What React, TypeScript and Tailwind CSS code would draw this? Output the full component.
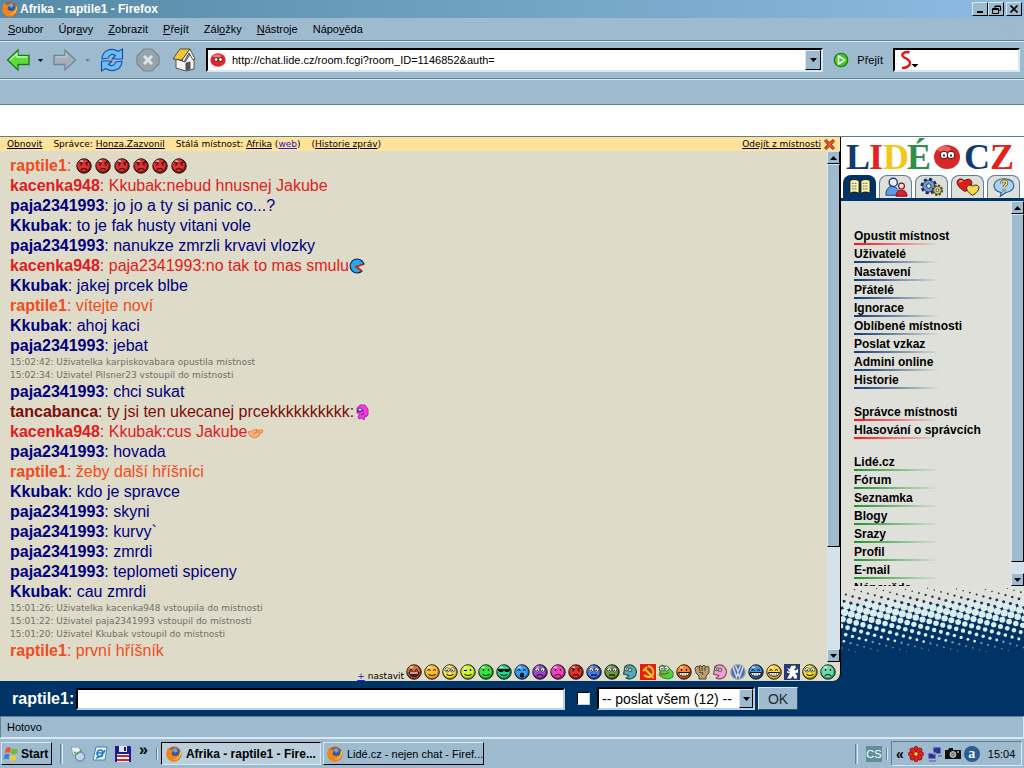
import React from 'react';

const raised = 'border border-t-[#d8e8f2] border-l-[#d8e8f2] border-r-black border-b-black bg-[#9dbacf]';

type FaceProps = { color: string; dark: string; eyes?: string; mouth?: string };

const Face: React.FC<FaceProps> = ({ color, dark, eyes = 'dots', mouth = 'smile' }) => (
  <svg className="h-4 w-4 shrink-0" viewBox="0 0 16 16" aria-hidden="true">
    <circle cx="8" cy="8" r="7.2" fill={dark} stroke="#111" strokeWidth="1" />
    <circle cx="7.5" cy="7.3" r="6.1" fill={color} />
    <ellipse cx="5.4" cy="3.2" rx="2" ry="1" fill="#fff" opacity=".6" />
    {eyes === 'dots' && <path d="M5.5 5v2M10.5 5v2" stroke="#000" strokeWidth="1.2" />}
    {eyes === 'closed' && <path d="M3.5 6.5l1.5-1 1.5 1M9 6.5l1.5-1 1.5 1" stroke="#000" fill="none" />}
    {eyes === 'wink' && <path d="M4 6.5h3M10.500 5v2" stroke="#000" strokeWidth="1.2" />}
    {eyes === 'shades' && <path d="M1.500 5h13v1.500h-1l-1 1.500h-3l-1.500-1.500L6.500 8h-3l-1-1.500h-1z" fill="#000" />}
    {eyes === 'angry' && <path d="M3.500 4l3 1.500M12.500 4l-3 1.500M5 6v1.500M11 6v1.500" stroke="#000" strokeWidth="1.1" />}
    {eyes === 'big' && (
      <g>
        <circle cx="5.200" cy="5.800" r="2.200" fill="#fff" stroke="#222" strokeWidth=".7" />
        <circle cx="10.600" cy="5.800" r="2.200" fill="#fff" stroke="#222" strokeWidth=".7" />
        <path d="M5.200 5.500v1.500M10.200 5.500v1.500" stroke="#000" strokeWidth="1.200" />
      </g>
    )}
    {mouth === 'smile' && <path d="M4.500 10c1.500 2 5.500 2 7 0" stroke="#000" fill="none" strokeWidth="1.100" />}
    {mouth === 'sad' && <path d="M5 12c1-2 5-2 6 0" stroke="#000" fill="none" strokeWidth="1.100" />}
    {mouth === 'flat' && <path d="M5 11h6" stroke="#000" strokeWidth="1.200" />}
    {mouth === 'open' && <ellipse cx="8" cy="11" rx="2.200" ry="2.500" fill="#111" />}
    {mouth === 'laugh' && (
      <g>
        <path d="M3 8h10c0 6-10 6-10 0z" fill="#6b1212" stroke="#000" strokeWidth=".800" />
        <path d="M4 9h8" stroke="#fff" strokeWidth="1.200" />
      </g>
    )}
    {mouth === 'teeth' && (
      <g>
        <path d="M2.500 8.500h11c-.500 5-10.500 5-11 0z" fill="#fff" stroke="#000" strokeWidth=".900" />
        <path d="M5.500 8.500v3.500M8 8.500v4M10.500 8.500v3.500" stroke="#555" strokeWidth=".600" />
      </g>
    )}
  </svg>
);

const Profile = ({ color, dark }: { color: string; dark: string }) => (
  <svg className="h-4 w-4 shrink-0" viewBox="0 0 16 16" aria-hidden="true">
    <path d="M3 2.500a7 7 0 1 1 1 11.500c0-1 3-1 3-2.500L1.500 10 2 8z" fill={color} stroke={dark} strokeWidth="1.100" />
    <circle cx="4.500" cy="5" r="1.800" fill="#fff" stroke="#222" strokeWidth=".700" />
    <circle cx="8" cy="6" r="1.800" fill="#fff" stroke="#222" strokeWidth=".700" />
    <path d="M4 5h1M7.500 6h1" stroke="#000" />
  </svg>
);

const smileys: React.ReactNode[] = [
  <Face color="#d9703a" dark="#a33e15" eyes="closed" mouth="laugh" />,
  <Face color="#ffc02e" dark="#e07d13" eyes="closed" />,
  <Face color="#fbe94a" dark="#c2a513" eyes="big" />,
  <Face color="#d3f22f" dark="#8fb311" eyes="wink" />,
  <Face color="#35e53c" dark="#149c1d" />,
  <Face color="#25d691" dark="#0d8a5b" eyes="shades" />,
  <Face color="#3c9cf0" dark="#1d62b8" eyes="closed" mouth="open" />,
  <Face color="#a944dd" dark="#6a1c97" eyes="big" mouth="sad" />,
  <Face color="#f041c0" dark="#ac1b85" mouth="sad" />,
  <Face color="#e5332d" dark="#8f1010" eyes="angry" mouth="sad" />,
  <Face color="#4b7df0" dark="#213bb0" eyes="big" mouth="flat" />,
  <Face color="#6fa238" dark="#3a5e16" eyes="big" mouth="flat" />,
  <Profile color="#55abb5" dark="#174c55" />,
  <svg className="h-4 w-4 shrink-0" viewBox="0 0 16 16" aria-hidden="true">
    <path d="M0 0h16v16H0z" fill="#e81c0c" />
    <path d="M8 2c7 2 7 10 1 11-2 0-4-1-5-2M13.500 14L5 5M3 7l4-4" fill="none" stroke="#ffd91c" strokeWidth="1.900" />
  </svg>,
  <svg className="h-4 w-4 shrink-0" viewBox="0 0 16 16" aria-hidden="true">
    <path d="M1 3l3-2 3 1 3 1 5 5v5l-4 2-6-1-4-3 1-3z" fill="#48d43b" stroke="#187a16" strokeWidth=".800" />
    <circle cx="4" cy="4.500" r="2.400" fill="#fff" stroke="#333" strokeWidth=".700" />
    <circle cx="8.500" cy="4.500" r="2.400" fill="#fff" stroke="#333" strokeWidth=".700" />
    <path d="M4 4v1.500M8 4v1.500" stroke="#000" strokeWidth="1.200" />
    <path d="M2 9c4 2 7 1 9-1" fill="none" stroke="#b02217" />
    <path d="M3 10l-1 3 3-1z" fill="#eb452f" />
  </svg>,
  <Face color="#ff8422" dark="#bd4807" mouth="teeth" />,
  <svg className="h-4 w-4 shrink-0" viewBox="0 0 16 16" aria-hidden="true">
    <path d="M1 4l2-2 2 1 1-2 2 2 2-2 2 2 2-1 1 2v5l-3 3v3H5v-3L2 9z" fill="#b69e70" stroke="#45391f" strokeWidth=".900" />
    <path d="M5 3l1 4M8 3v4M11 3v4M5 8l4 1-1 2" fill="none" stroke="#45391f" strokeWidth=".900" />
  </svg>,
  <Profile color="#f3a4ce" dark="#8e3d6c" />,
  <svg className="h-4 w-4 shrink-0" viewBox="0 0 16 16" aria-hidden="true">
    <circle cx="8" cy="8" r="7.300" fill="#5770ad" stroke="#9aa8c0" strokeWidth="1.200" />
    <path d="M3 3l3.500 10L8 9l1.500 4L13 3M5.500 2L8 7.500 10.500 2" fill="none" stroke="#dce4f0" strokeWidth="1.300" />
  </svg>,
  <Face color="#4492d8" dark="#1d4785" eyes="closed" mouth="teeth" />,
  <Face color="#ffd43d" dark="#dda215" eyes="closed" mouth="teeth" />,
  <svg className="h-4 w-4 shrink-0" viewBox="0 0 16 16" aria-hidden="true">
    <path d="M0 0h16v16H0z" fill="#2b3a72" />
    <path d="M7 2l4-.500 1 2-2 2 2 1 2-2v4l-3 1 2 2v3h-3l-1-3-2 3H3l3-5-3-1V7l3 1-3-4 3 1z" fill="#fff" />
  </svg>,
  <Face color="#f2dd2c" dark="#a99310" eyes="big" />,
  <Face color="#67dbab" dark="#2f9870" mouth="sad" />,
];

type Message = { nick?: string; text: string; color?: string; icon?: React.ReactNode };

const angry = <Face color="#dd3030" dark="#8d1010" eyes="angry" mouth="sad" />;

const orange = 'text-[#f04c20]';
const red = 'text-[#e01c20]';
const navy = 'text-[#000080]';

const messages: Message[] = [
  {
    nick: 'raptile1', text: '', color: orange,
    icon: <span className="flex gap-[3px]">{[0, 1, 2, 3, 4, 5].map((i) => <React.Fragment key={i}>{angry}</React.Fragment>)}</span>,
  },
  { nick: 'kacenka948', text: 'Kkubak:nebud hnusnej Jakube', color: red },
  { nick: 'paja2341993', text: 'jo jo a ty si panic co...?', color: navy },
  { nick: 'Kkubak', text: 'to je fak husty vitani vole', color: navy },
  { nick: 'paja2341993', text: 'nanukze zmrzli krvavi vlozky', color: navy },
  {
    nick: 'kacenka948', text: 'paja2341993:no tak to mas smulu', color: red,
    icon: (
      <svg className="h-4 w-4" viewBox="0 0 16 16" aria-hidden="true">
        <path d="M13 3A7 7 0 1 0 13 13L7 9l8-3z" fill="#2aa8e8" stroke="#0b2a52" strokeWidth="1.200" />
        <path d="M14 6.500L7 8.500l6 4.500" fill="none" stroke="#e62117" strokeWidth="1.600" />
      </svg>
    ),
  },
  { nick: 'Kkubak', text: 'jakej prcek blbe', color: navy },
  { nick: 'raptile1', text: 'vítejte noví', color: orange },
  { nick: 'Kkubak', text: 'ahoj kaci', color: navy },
  { nick: 'paja2341993', text: 'jebat', color: navy },
  { text: '15:02:42: Uživatelka karpiskovabara opustila místnost' },
  { text: '15:02:34: Uživatel Pilsner23 vstoupil do místnosti' },
  { nick: 'paja2341993', text: 'chci sukat', color: navy },
  {
    nick: 'tancabanca', text: 'ty jsi ten ukecanej prcekkkkkkkkkk:', color: 'text-[#7b0c0c]',
    icon: (
      <svg className="h-4 w-4" viewBox="0 0 16 16" aria-hidden="true">
        <path d="M3 4l3-3h5l3 4v6l-2 2-1-2-1 5-2-2-3 1-1-3 2-2-3-1z" fill="#f03cd8" stroke="#c81cb4" />
        <circle cx="6" cy="6" r="2" fill="#fff" stroke="#3b22b0" />
        <path d="M3 7l7 0M7 11l3-2" stroke="#3b22b0" />
      </svg>
    ),
  },
  {
    nick: 'kacenka948', text: 'Kkubak:cus Jakube', color: red,
    icon: (
      <svg className="h-4 w-4" viewBox="0 0 16 16" aria-hidden="true">
        <path d="M0 8l4-1 4-2 2 1h5l-1 3h-2l-1 3-4 2-5-2z" fill="#fbae86" stroke="#e88748" />
        <path d="M5 10l4-2h3M8 5l1 3" fill="none" stroke="#e07f2a" />
      </svg>
    ),
  },
  { nick: 'paja2341993', text: 'hovada', color: navy },
  { nick: 'raptile1', text: 'žeby další hříšníci', color: orange },
  { nick: 'Kkubak', text: 'kdo je spravce', color: navy },
  { nick: 'paja2341993', text: 'skyni', color: navy },
  { nick: 'paja2341993', text: 'kurvy`', color: navy },
  { nick: 'paja2341993', text: 'zmrdi', color: navy },
  { nick: 'paja2341993', text: 'teplometi spiceny', color: navy },
  { nick: 'Kkubak', text: 'cau zmrdi', color: navy },
  { text: '15:01:26: Uživatelka kacenka948 vstoupila do místnosti' },
  { text: '15:01:22: Uživatel paja2341993 vstoupil do místnosti' },
  { text: '15:01:20: Uživatel Kkubak vstoupil do místnosti' },
  { nick: 'raptile1', text: 'první hříšník', color: orange },
];

const menu = [
  ['', 'S', 'oubor'], ['Úpr', 'a', 'vy'], ['', 'Z', 'obrazit'], ['', 'P', 'řejít'],
  ['Zál', 'o', 'žky'], ['', 'N', 'ástroje'], ['Nápo', 'v', 'ěda'],
];

const sideGroups = [
  { line: 'from-[#ff1010]', items: ['Opustit místnost'] },
  {
    line: 'from-[#0c3a75]',
    items: ['Uživatelé', 'Nastavení', 'Přátelé', 'Ignorace', 'Oblíbené místnosti', 'Poslat vzkaz', 'Admini online', 'Historie'],
  },
  { line: 'from-[#ff1010]', items: ['Správce místnosti', 'Hlasování o správcích'] },
  { line: 'from-[#1d962a]', items: ['Lidé.cz', 'Fórum', 'Seznamka', 'Blogy', 'Srazy', 'Profil', 'E-mail', 'Nápověda'] },
];

const Firefox = () => (
  <svg className="h-4 w-4 shrink-0" viewBox="0 0 16 16" aria-hidden="true">
    <circle cx="8" cy="8" r="7.500" fill="#d9580b" />
    <circle cx="8.500" cy="7" r="5.300" fill="#2a5aa8" />
    <path d="M6 3l4-1 2 3-3 2z" fill="#6ea6dd" />
    <path d="M1 4l1-2 2 2c2-1 3 0 3 1L5.500 7c0 3 4 4 7 2l1.500-5c2 4 0 11-6 11.500C3 15.500-.500 11 .500 7z" fill="#f0861a" />
    <path d="M13.500 4c2 4-1 9-6 9.500 4 1 8-3 7.500-7z" fill="#ffcf3a" />
  </svg>
);

const Arrow = ({ up = false }: { up?: boolean }) => (
  <svg className="h-1 w-[7px]" viewBox="0 0 7 4" aria-hidden="true">
    <path d={up ? 'M0 4L3.500 0 7 4z' : 'M0 0h7L3.500 4z'} fill="#000" />
  </svg>
);

const Scrollbar = ({ thumb }: { thumb: string }) => (
  <div className="flex w-[13px] shrink-0 flex-col bg-[#d3e2eb]">
    <button aria-label="Nahoru" className={`flex h-[13px] items-center justify-center ${raised}`}><Arrow up /></button>
    <div className="min-h-0 flex-1">
      <div className={`${thumb} ${raised}`} />
    </div>
    <button aria-label="Dolů" className={`flex h-[13px] items-center justify-center ${raised}`}><Arrow /></button>
  </div>
);

const Separator = () => <span className="h-5 w-[3px] border-l border-l-[#5f8296] border-r border-r-[#d8e8f2]" />;

// Rotated dot grid: dark dots grow downwards, then light dots shrink into the navy
const Halftone = () => {
  const dark: React.ReactNode[] = [];
  const light: React.ReactNode[] = [];
  const step = 7;
  const a = 0.27;
  const edge = 21;
  for (let i = -10; i < 40; i++) {
    for (let j = -20; j < 20; j++) {
      const x = (i * Math.cos(a) - j * Math.sin(a)) * step;
      const y = (i * Math.sin(a) + j * Math.cos(a)) * step;
      const x2 = x + (Math.cos(a) - Math.sin(a)) * step / 2;
      const y2 = y + (Math.sin(a) + Math.cos(a)) * step / 2;
      if (x > -4 && x < 190 && y > 2 && y < edge + 2) {
        dark.push(<circle key={`${i}_${j}`} cx={x} cy={y} r={0.4 + y / 13} fill="#12395c" />);
      }
      if (x2 > -4 && x2 < 190 && y2 > edge - 4 && y2 < 66) {
        const r = Math.min(3.600, (72 - y2) / 12.500);
        light.push(<circle key={`${i}_${j}`} cx={x2} cy={y2} r={r} fill={r < 1.300 ? '#5f97b8' : '#dcebec'} />);
      }
    }
  }
  return (
    <svg className="h-20 w-full shrink-0" viewBox="0 0 183 80" preserveAspectRatio="xMidYMid slice" aria-hidden="true">
      <path d="M0 0h184v21H0z" fill="#e0e1da" />
      {dark}
      <path d="M0 21h184v59H0z" fill="#003366" />
      {light}
    </svg>
  );
};

const tabIcons = [
  <g key="b">
    <path d="M1 5c4-2 7-1 10 0v14c-3-2-7-2-10 0zM23 5c-4-2-7-1-10 0v14c3-2 7-2 10 0z" fill="#fff3a4" stroke="#111" />
    <path d="M3 8h6M3 11h6M3 14h6M15 8h6M15 11h6M15 14h6" stroke="#5f8a92" strokeWidth="1.200" strokeDasharray="2 1" />
  </g>,
  <g key="u" stroke="#1c3d78">
    <path d="M1 21C0 8 16 8 15 21z" fill="#5b9ce4" />
    <circle cx="9" cy="7" r="4.500" fill="#e3effb" strokeWidth="1.500" />
    <path d="M12 22c0-9 12-9 12 0z" fill="#e02030" stroke="#5c0d18" />
    <circle cx="18" cy="11" r="3.200" fill="#fbe3e3" stroke="#7a1820" strokeWidth="1.300" />
  </g>,
  <g key="s">
    <circle cx="8.500" cy="11" r="7.500" fill="none" stroke="#152b58" strokeWidth="3" strokeDasharray="3.400 2.500" />
    <circle cx="8.500" cy="11" r="6.500" fill="#6a9bdd" stroke="#1a2c52" />
    <circle cx="8.500" cy="11" r="2.500" fill="#e6e7e2" stroke="#1a2c52" />
    <circle cx="18" cy="15.500" r="5" fill="none" stroke="#4d4520" strokeWidth="2.500" strokeDasharray="2.400 1.500" />
    <circle cx="18" cy="15.500" r="4.200" fill="#ddd28b" stroke="#554c20" />
    <circle cx="18" cy="15.500" r="1.600" fill="#fff" stroke="#554c20" />
  </g>,
  <g key="h" stroke="#421010">
    <path d="M9 17C-6 9 1-1 8 5c8-5 13 4 1 12z" fill="#e01c1c" />
    <path d="M17 21C6 15 11 7 17 11c7-4 11 4 0 10z" fill="#f2dc4c" />
    <path d="M3 7c0-2 2-2 3-1" fill="none" stroke="#ffb0a8" strokeWidth="1.500" />
  </g>,
  <g key="q">
    <path d="M12 3c14 0 14 14 2 15l-6 4 1-4C-3 16-1 3 12 3z" fill="#a6d2f5" stroke="#24558c" strokeWidth="1.200" />
    <path d="M9 8c0-4 7-3 6 0 0 2-3 2-3 4M12 14v2.500" fill="none" stroke="#5a4208" strokeWidth="3" />
    <path d="M9 8c0-4 7-3 6 0 0 2-3 2-3 4M12 14v2" fill="none" stroke="#fbe27a" strokeWidth="1.600" />
  </g>,
];
const tabNames = ['Menu', 'Uživatelé', 'Nastavení', 'Přátelé', 'Nápověda'];

const Logo = () => (
  <svg className="h-[38px] w-full shrink-0 overflow-visible" viewBox="0 0 183 38" preserveAspectRatio="xMinYMid meet" role="img" aria-label="LIDÉ CZ">
    <g fontFamily="Liberation Serif, serif" fontWeight="700" fontSize="36">
      <text x="5" y="32" fill="#103c70">L</text>
      <text x="28" y="32" fill="#e3201b">I</text>
      <text x="42" y="32" fill="#f2c81c">D</text>
      <text x="66" y="32" fill="#2f8f4a">É</text>
      <text x="123" y="32" fill="#103c70">C</text>
      <text x="149" y="32" fill="#e3201b">Z</text>
    </g>
    <ellipse cx="106" cy="20" rx="13" ry="12" fill="#d92626" />
    <ellipse cx="103" cy="12" rx="7" ry="3" fill="#ff8c84" opacity=".600" />
    <circle cx="103" cy="18" r="3.800" fill="#fff" stroke="#451010" />
    <circle cx="110" cy="18" r="3.800" fill="#fff" stroke="#451010" />
    <path d="M103 17.500v2M110 17.500v2" stroke="#000" strokeWidth="1.600" />
  </svg>
);

const TopBars = () => (
  <>
    <header className="flex h-[18px] shrink-0 items-center bg-linear-to-r from-[#568aa6] to-[#8ebbe2] pl-[2px] pr-[2px]">
      <Firefox />
      <h1 className="flex-1 pl-[2px] text-xs font-bold text-white">Afrika - raptile1 - Firefox</h1>
      <div className="flex">
        <button aria-label="Minimalizovat" className={`flex h-[14px] w-4 items-end justify-center pb-[2px] ${raised}`}>
          <span className="h-[2px] w-[6px] bg-black" />
        </button>
        <button aria-label="Obnovit okno" className={`flex h-[14px] w-4 items-center justify-center ${raised}`}>
          <svg className="h-[9px] w-[9px]" viewBox="0 0 9 9" fill="none" stroke="#000"><path d="M3 3V1h5.500v4.500H7M.500 3.500h6v5h-6zM.500 4.500h6M3 1.500h5" /></svg>
        </button>
        <button aria-label="Zavřít" className={`ml-[2px] flex h-[14px] w-4 items-center justify-center ${raised}`}>
          <svg className="h-2 w-2" viewBox="0 0 8 8" stroke="#000" strokeWidth="1.600"><path d="M.500.500l7 7M7.500.500l-7 7" /></svg>
        </button>
      </div>
    </header>

    <nav className="flex h-[23px] shrink-0 items-center gap-[15px] border-b border-[#5f8296] pl-2 pr-2">
      {menu.map(([before, key, after]) => (
        <button key={after}>{before}<u>{key}</u>{after}</button>
      ))}
      <span className="ml-auto h-3 w-3 rounded-full border-2 border-[#a9b4c2]" />
    </nav>

    <div className="flex h-[38px] shrink-0 items-center border-b border-t border-b-[#5f8296] border-t-[#d8e8f2] pl-[6px] pr-1">
      <button aria-label="Zpět">
        <svg className="h-6 w-6" viewBox="0 0 24 24"><path d="M1.500 12L12 2v5.500h11v9H12V22z" fill="#5fdc3c" stroke="#1b7d16" strokeWidth="1.300" /><path d="M4 12l7-6.500V9h10.500" fill="none" stroke="#c3f7ab" strokeWidth="1.300" /></svg>
      </button>
      <button aria-label="Historie zpět" className="ml-2"><svg className="h-[3px] w-[5px]" viewBox="0 0 5 3"><path d="M0 0h5L2.500 3z" /></svg></button>
      <button aria-label="Vpřed" className="ml-[10px]">
        <svg className="h-6 w-6" viewBox="0 0 24 24"><path d="M22.500 12L12 2v5.500H1v9h11V22z" fill="#a5b1ba" stroke="#748492" strokeWidth="1.300" /><path d="M2.500 9H13V5.500" fill="none" stroke="#cdd8df" /></svg>
      </button>
      <button aria-label="Historie vpřed" className="ml-2"><svg className="h-[3px] w-[5px]" viewBox="0 0 5 3"><path d="M0 0h5L2.500 3z" fill="#6a8496" /></svg></button>
      <button aria-label="Obnovit stránku" className="ml-[10px]">
        <svg className="h-6 w-6" viewBox="0 0 24 24" fill="#6cbcf7" stroke="#1553a8" strokeWidth="1.200" strokeLinejoin="round">
          <path d="M2 11C2 2 12-1 18 3.500L22.500 1v10H12l3.500-3.500C12 5 9 7 8.500 10z" />
          <path d="M22 13c0 9-10 12-16 7.500L1.500 23V13H12l-3.500 3.500C12 19 15 17 15.500 14z" />
        </svg>
      </button>
      <button aria-label="Zastavit" className="ml-3">
        <svg className="h-6 w-6" viewBox="0 0 24 24"><path d="M8 1h8l7 7v8l-7 7H8l-7-7V8z" fill="#98a3ac" stroke="#7b8993" strokeWidth="1.200" /><path d="M8 8l8 8M16 8l-8 8" stroke="#dce4e9" strokeWidth="3" /></svg>
      </button>
      <button aria-label="Domů" className="ml-3">
        <svg className="h-6 w-6" viewBox="0 0 24 24" stroke="#444" strokeWidth=".900">
          <path d="M4 11l9 3 6-9 3 6v10l-8 2-10-3z" fill="#f4f4f6" />
          <path d="M1 11L8 1h10l-8 11z" fill="#f6c62e" />
          <path d="M18 1l5 10-2 1-4-7-5 9-2-2z" fill="#ececec" />
          <path d="M14 22v-7l4-1v7z" fill="#4f5a78" />
        </svg>
      </button>
      <div className="ml-[10px] flex h-6 min-w-0 flex-1 items-center border-2 border-b-[#d8e8f2] border-l-black border-r-[#d8e8f2] border-t-black bg-white pl-[2px]">
        <svg className="h-4 w-4 shrink-0" viewBox="0 0 16 16" aria-hidden="true">
          <ellipse cx="8" cy="8" rx="7.700" ry="6.700" fill="#dc2830" />
          <ellipse cx="7" cy="4" rx="4" ry="1.500" fill="#ff9a94" opacity=".700" />
          <circle cx="6" cy="7.500" r="1.900" fill="#fff" stroke="#400" strokeWidth=".800" /><circle cx="10.500" cy="7.500" r="1.900" fill="#fff" stroke="#400" strokeWidth=".800" />
        </svg>
        <input aria-label="Adresa" className="h-full min-w-0 flex-1 pl-[6px] outline-none" defaultValue="http://chat.lide.cz/room.fcgi?room_ID=1146852&auth=" />
        <button aria-label="Rozbalit adresy" className={`flex h-5 w-4 items-center justify-center ${raised}`}><Arrow /></button>
      </div>
      <button className="ml-[10px] flex items-center gap-2">
        <svg className="h-4 w-4" viewBox="0 0 16 16"><circle cx="8" cy="8" r="6.700" fill="#46c933" stroke="#17850f" strokeWidth="1.300" /><path d="M5.500 4v8l6-4z" fill="#46c933" stroke="#fff" strokeWidth="1.500" /></svg>
        Přejít
      </button>
      <div className="ml-[10px] flex h-6 w-[127px] items-center border-2 border-b-[#d8e8f2] border-l-black border-r-[#d8e8f2] border-t-black bg-white pl-1">
        <svg className="h-5 w-5 shrink-0" viewBox="0 0 20 20" aria-hidden="true">
          <path d="M10.500 2.500C6 1 1.500 4 4 6.500c2 2 7 3 7 6.500 0 3-4 5-8 5" fill="none" stroke="#e21414" strokeWidth="2.400" />
          <path d="M12.500 14h7L16 17.500z" fill="#000" />
        </svg>
        <input aria-label="Hledat" className="h-full min-w-0 flex-1 outline-none" />
      </div>
    </div>

    <div className="h-[26px] shrink-0 border-b border-t border-b-[#5f8296] border-t-[#d8e8f2]" />
    <div className="h-8 shrink-0 border-b border-[#5c7d92] bg-white" />
  </>
);

const ChatRoom = () => (
  <main className="flex min-w-0 flex-1 flex-col">
    <div className="flex min-h-0 flex-1 flex-col overflow-hidden rounded-br-lg border-r border-black bg-[#dedbc8]">
      <div className="flex h-[14px] shrink-0 items-center bg-[#ffe29c] pl-[7px] pr-[5px] font-[DejaVu_Sans,sans-serif] text-[9px] leading-[14px]">
        <a href="#obnovit" className="underline">Obnovit</a>
        <span className="ml-[11px]">Správce: <a href="#spravce" className="underline">Honza.Zazvonil</a></span>
        <span className="ml-[11px]">Stálá místnost: <a href="#afrika" className="underline">Afrika</a> (<a href="#web" className="text-[#2020d0] underline">web</a>)</span>
        <span className="ml-[11px]">(<a href="#zpravy" className="underline">Historie zpráv</a>)</span>
        <a href="#odejit" className="ml-auto flex items-center gap-[3px] underline">
          Odejít z místnosti
          <svg className="h-[11px] w-[11px]" viewBox="0 0 11 11" aria-hidden="true"><path d="M2 .500l3.500 3 3.500-3L10.500 2 7.500 5.500l3 3.500L9 10.500l-3.500-3-3.500 3L.500 9l3-3.500-3-3.500z" fill="#f0532d" stroke="#7c1a08" strokeWidth=".800" /></svg>
        </a>
      </div>
      <div className="flex min-h-0 flex-1">
        <div className="min-w-0 flex-1 overflow-hidden pl-[10px] pt-[5px]">
          {messages.map((m) =>
            m.nick ? (
              <p key={m.nick + m.text} className={`flex h-5 items-center whitespace-pre text-base leading-5 ${m.color}`}>
                <b>{m.nick}</b>: {m.text}{m.icon}
              </p>
            ) : (
              <p key={m.text} className="h-[13px] font-[DejaVu_Sans,sans-serif] text-[9px] leading-[13px] text-[#70706a]">{m.text}</p>
            ),
          )}
        </div>
        <Scrollbar thumb="h-[79%]" />
      </div>
      <div className="flex h-[19px] shrink-0 items-center justify-end gap-[2px] pr-1">
        <span className="mt-2 font-[DejaVu_Sans,sans-serif] text-[9px]"><a href="#pridat" className="text-[#2020d0] underline">+</a> nastavit</span>
        {smileys.map((s, i) => <React.Fragment key={i}>{s}</React.Fragment>)}
      </div>
    </div>

    <form className="flex h-[35px] shrink-0 items-center pl-3 pr-[43px] text-base text-white" onSubmit={(e) => e.preventDefault()}>
      <label htmlFor="message" className="font-bold">raptile1:</label>
      <input id="message" className="ml-[2px] h-[22px] min-w-0 flex-1 border-2 border-b-[#b9d3e4] border-l-black border-r-[#b9d3e4] border-t-black bg-white px-1 text-black outline-none" />
      <input type="checkbox" aria-label="Šeptat" className="ml-3 h-[13px] w-[13px] appearance-none border border-b-[#b9d3e4] border-l-black border-r-[#b9d3e4] border-t-black bg-white" />
      <div className="ml-[7px] flex h-[23px] w-[158px] border-2 border-b-[#b9d3e4] border-l-black border-r-[#b9d3e4] border-t-black bg-white text-sm text-black">
        <select aria-label="Komu" className="min-w-0 flex-1 appearance-none pl-[3px] outline-none">
          <option>-- poslat všem (12) --</option>
        </select>
        <span className={`flex w-[14px] items-center justify-center ${raised}`}><Arrow /></span>
      </div>
      <button className="ml-[3px] h-[23px] w-10 border border-b-[#2f526c] border-l-[#d8e8f2] border-r-[#2f526c] border-t-[#d8e8f2] bg-[#9dbacf] text-sm text-[#1c2c3a]">OK</button>
    </form>
  </main>
);

const SidePanel = () => (
  <aside className="flex w-[183px] shrink-0 flex-col">
    <div className="flex flex-col bg-white">
      <Logo />
      <div className="flex h-[26px] items-end gap-[3px] border-b-[3px] border-[#003366] pl-[2px]">
        {tabNames.map((name, i) => (
          <button
            key={name}
            aria-label={name}
            className={`flex h-[23px] w-[33px] items-center justify-center rounded-t-lg ${i === 0 ? 'bg-[#003366]' : 'border border-b-0 border-[#5b7da8] bg-[#dfe0da]'}`}
          >
            <svg className="h-[22px] w-6" viewBox="0 0 24 24" aria-hidden="true">{tabIcons[i]}</svg>
          </button>
        ))}
      </div>
    </div>
    <div className="flex min-h-0 flex-1 bg-[#dfe0da]">
      <nav className="min-h-0 min-w-0 flex-1 overflow-hidden pl-[13px] pt-[26px] text-xs font-bold">
        {sideGroups.map((g, i) => (
          <ul key={g.items[0]} className={i > 1 ? 'mt-[14px]' : ''}>
            {g.items.map((item) => (
              <li key={item} className="flex h-[18px] flex-col whitespace-nowrap">
                <a href="#menu" className="h-4 leading-[18px]">{item}</a>
                <span className={`h-[2px] w-[86px] bg-linear-to-r to-transparent ${g.line}`} />
              </li>
            ))}
          </ul>
        ))}
      </nav>
      <Scrollbar thumb="h-[97%]" />
    </div>
    <Halftone />
    <div className="h-[50px] shrink-0" />
  </aside>
);

const Taskbar = () => (
  <footer className="flex h-[30px] shrink-0 items-center border-t border-[#d8e8f2] pl-px pr-[2px]">
    <button className={`flex h-[23px] w-[51px] items-center gap-[2px] pl-px text-xs font-bold ${raised}`}>
      <svg className="h-4 w-4 shrink-0" viewBox="0 0 16 16" aria-hidden="true">
        <path d="M3 2c2-1 3-1 5 0L7 7C5 6 4 6 2 7z" fill="#e8562a" /><path d="M9 2.500c2 1 4 1 6 0l-1 5c-2 1-4 1-6 0z" fill="#6dbb34" />
        <path d="M1.500 8.500c2-1 3-1 5 0l-1 5c-2-1-3-1-5 0z" fill="#3d7ee0" /><path d="M7.500 9c2 1 4 1 6 0l-1 5c-2 1-4 1-6 0z" fill="#f4c92c" />
      </svg>
      Start
    </button>
    <div className="ml-2 flex flex-1 items-center">
      <Separator />
      <svg className="ml-[7px] h-4 w-4" viewBox="0 0 16 16" aria-hidden="true"><path d="M1 1h8l2 4-3 4H3z" fill="#e6f0f2" stroke="#8a9eac" /><circle cx="10" cy="10.500" r="4.500" fill="#c7d4ee" stroke="#5e6db0" /><path d="M4 6l3 2 5-4" fill="none" stroke="#49a84f" strokeWidth="1.500" /></svg>
      <svg className="ml-[6px] h-4 w-4" viewBox="0 0 16 16" aria-hidden="true"><path d="M4 1h11l-2 13H1z" fill="#e8f3fa" stroke="#3e86bd" /><path d="M11 7H5c1-4 6-4 6 0zM5 7c0 5 5 4 6 2M4 12c3 0 8-4 9-8" fill="none" stroke="#1f7cc8" strokeWidth="1.500" /></svg>
      <svg className="ml-[7px] h-4 w-4" viewBox="0 0 16 16" aria-hidden="true"><path d="M0 0h15l1 1v15H0z" fill="#1c1c8c" /><path d="M4 0h8v6H4z" fill="#dfe4ef" /><path d="M9 1h2v4H9z" fill="#1c1c8c" /><path d="M2 8h12v8H2z" fill="#fff" /><path d="M2 9h12v2H2zM2 13h12v2H2z" fill="#d8202c" /></svg>
      <button aria-label="Další" className="ml-2 mb-2 text-base leading-4 font-bold">»</button>
      <span className="ml-2"><Separator /></span>
      <button className="ml-[3px] flex h-[23px] w-[160px] items-center gap-1 border border-b-[#d8e8f2] border-l-black border-r-[#d8e8f2] border-t-black bg-[#bacfdc] pl-1 text-xs font-bold">
        <Firefox /><span className="whitespace-nowrap">Afrika - raptile1 - Fire...</span>
      </button>
      <button className={`ml-[2px] flex h-[23px] w-[161px] items-center gap-1 pl-[3px] ${raised}`}>
        <Firefox /><span className="whitespace-nowrap">Lidé.cz - nejen chat - Firef...</span>
      </button>
    </div>
    <Separator />
    <span className="ml-2 flex h-4 w-4 items-center justify-center bg-[#5f8f98] text-[11px] text-white">CS</span>
    <span className="ml-1"><Separator /></span>
    <div className="ml-[3px] flex h-[25px] w-[131px] items-center border border-b-[#d8e8f2] border-l-[#5f8296] border-r-[#d8e8f2] border-t-[#5f8296] pl-1">
      <span className="text-sm font-bold">«</span>
      <svg className="ml-1 h-4 w-4" viewBox="0 0 16 16" aria-hidden="true">
        {[0, 45, 90, 135, 180, 225, 270, 315].map((r) => <ellipse key={r} cx="8" cy="3.500" rx="2.300" ry="3.200" fill="#e62222" stroke="#7c0c0c" strokeWidth=".700" transform={`rotate(${r} 8 8)`} />)}
        <circle cx="8" cy="8" r="1.800" fill="#ffe35a" />
      </svg>
      <svg className="ml-[3px] h-4 w-4" viewBox="0 0 16 16" aria-hidden="true"><path d="M6 1h8v7H6zM1 7h8v6H1z" fill="#2e3590" stroke="#a7addf" /><path d="M2 15h7M11 10h4" stroke="#77759c" strokeWidth="1.500" /></svg>
      <svg className="ml-[2px] h-4 w-4" viewBox="0 0 16 16" aria-hidden="true"><path d="M0 4h3l1-2h4v2h8v9H0z" fill="#111" /><circle cx="8" cy="8.500" r="3" fill="#8a8d80" stroke="#ddd" strokeWidth=".800" /><path d="M12 6h2" stroke="#fff" /></svg>
      <span className="ml-[3px] flex h-4 w-4 items-center justify-center rounded-full bg-[#2b5d91] font-[Liberation_Serif,serif] text-sm leading-4 font-bold text-white">a</span>
      <time className="ml-2 text-[11px]">15:04</time>
    </div>
  </footer>
);

const App: React.FC = () => (
  <div className="flex h-screen flex-col overflow-hidden bg-[#9dbacf] font-[Liberation_Sans,Arial,sans-serif] text-[11px] leading-[14px] text-black">
    <TopBars />
    <div className="flex min-h-0 flex-1 bg-[#003366]">
      <ChatRoom />
      <SidePanel />
    </div>
    <div className="flex h-[22px] shrink-0 items-center border border-b-[#d8e8f2] border-l-[#5f8296] border-r-[#d8e8f2] border-t-[#5f8296] pl-[6px]">Hotovo</div>
    <Taskbar />
  </div>
);

export default App;
